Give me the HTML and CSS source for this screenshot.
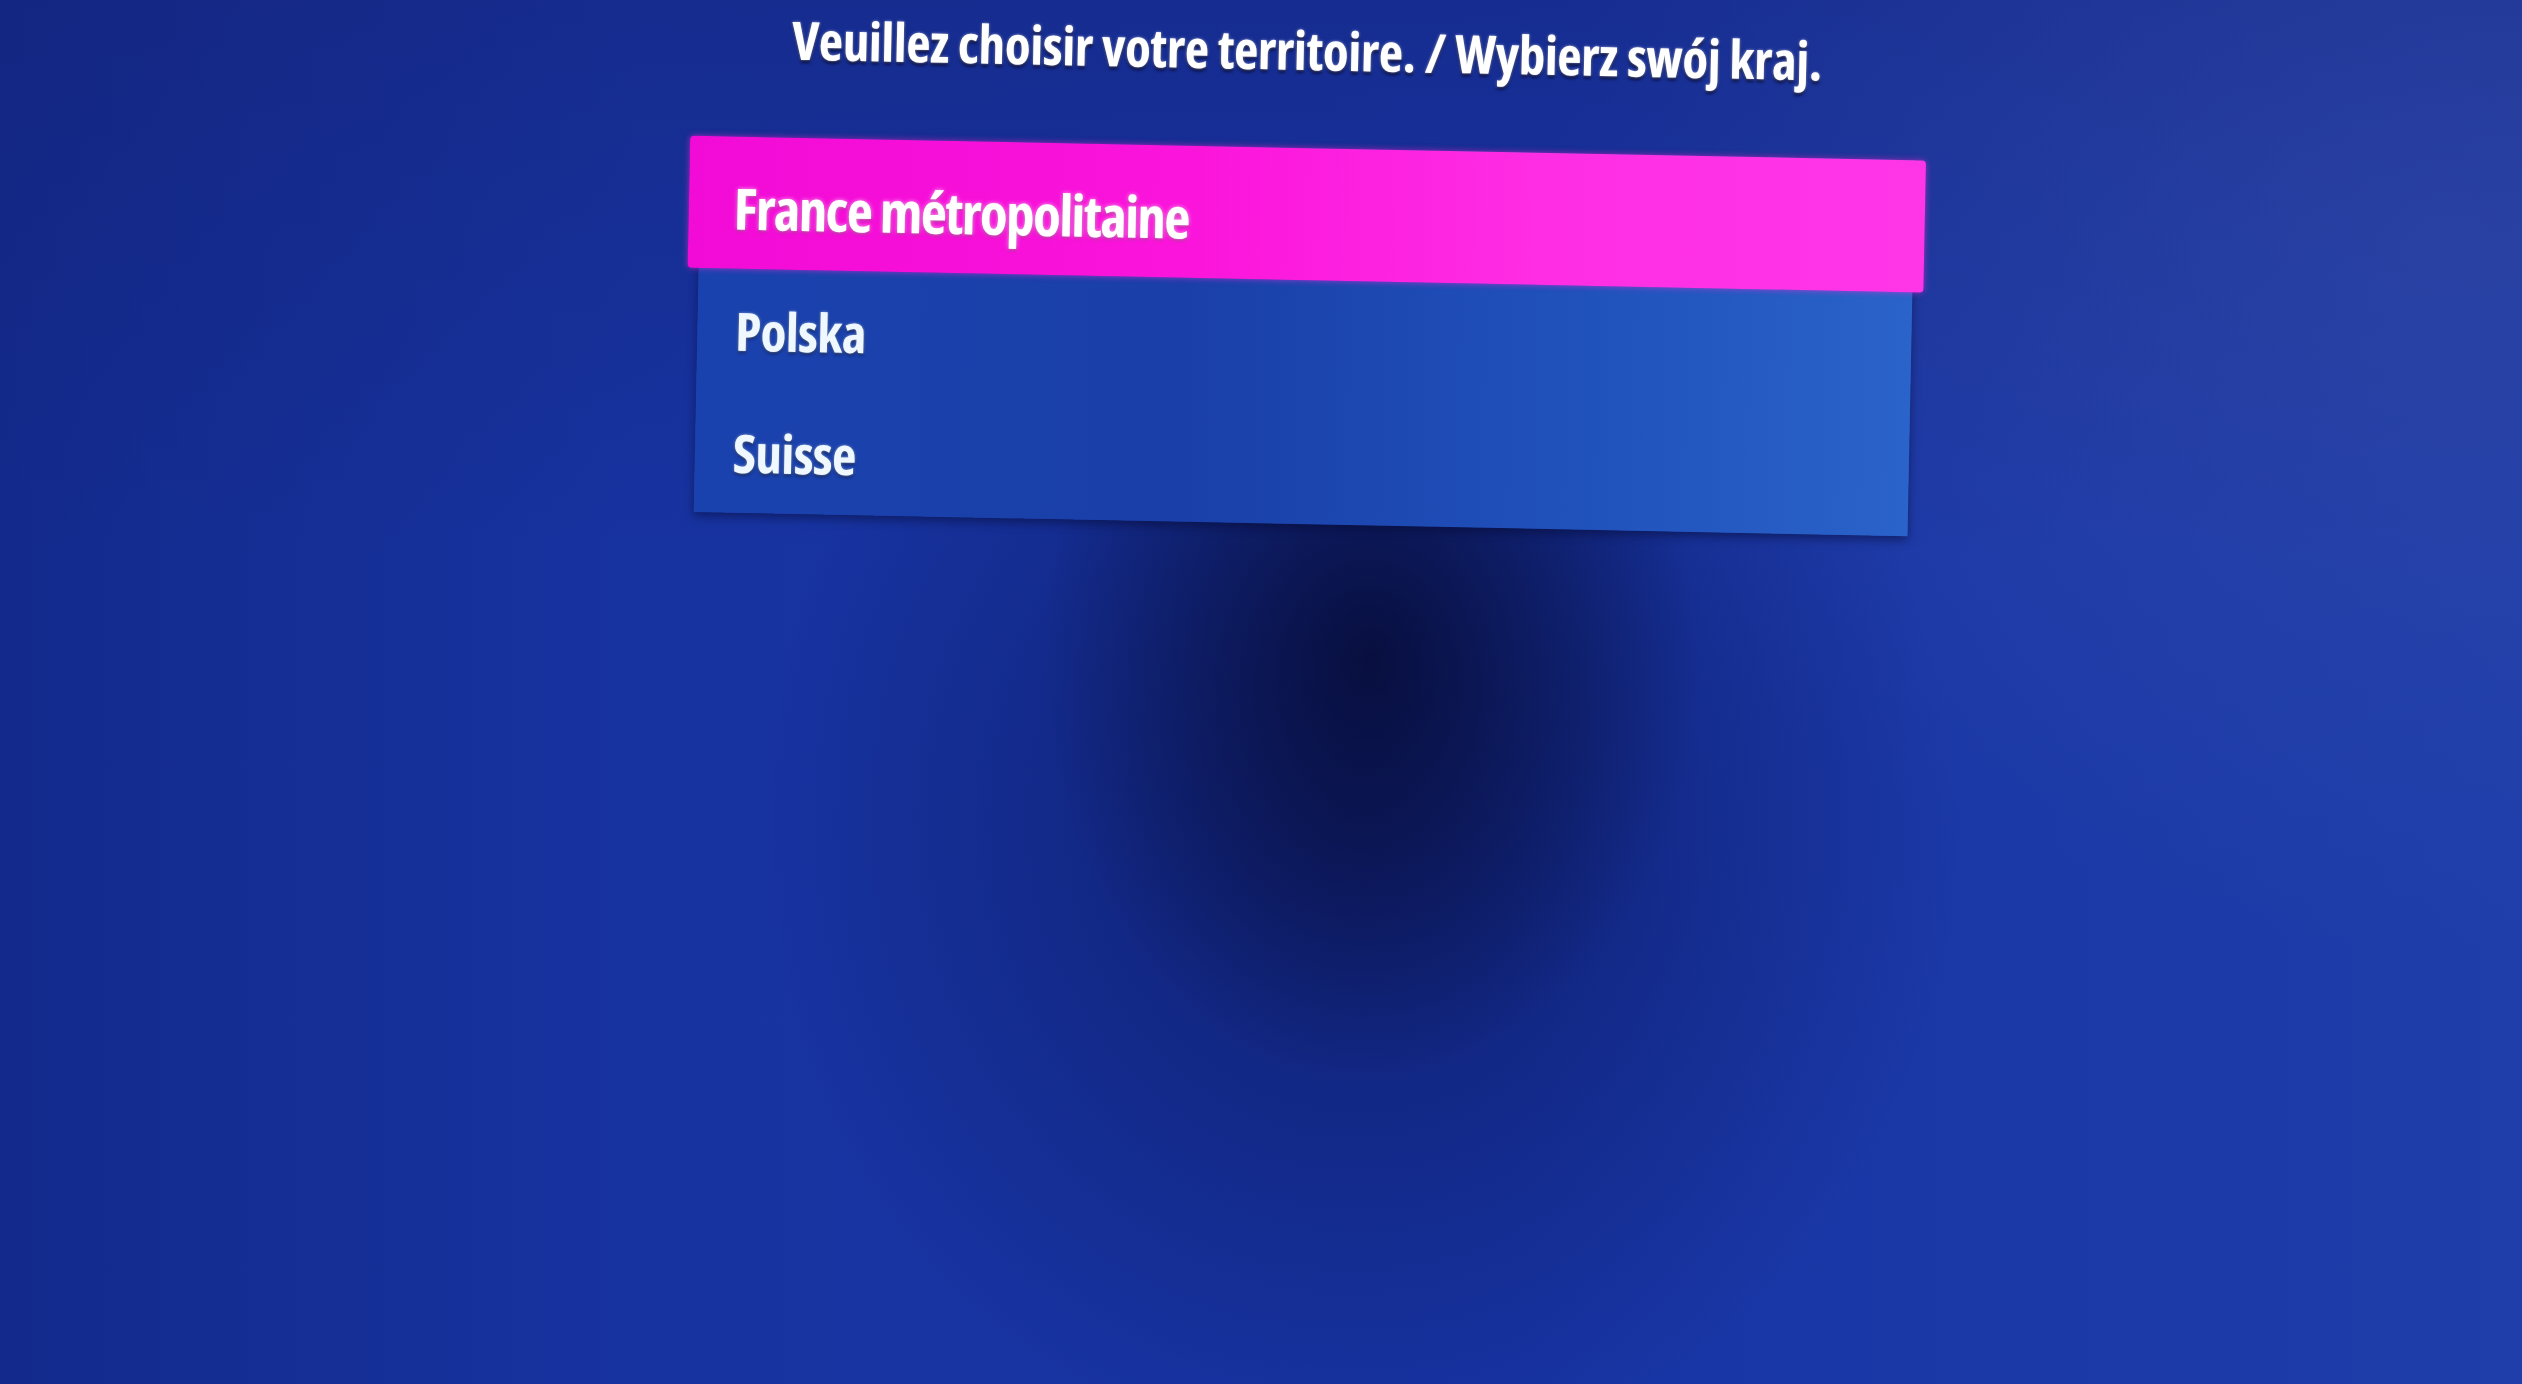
FILE: index.html
```html
<!DOCTYPE html>
<html lang="fr">
<head>
<meta charset="utf-8">
<title>Territoire</title>
<link rel="stylesheet" href="styles.css">
</head>
<body>
<main class="screen">
  <div class="content">
    <h1 class="title">Veuillez choisir votre territoire. / Wybierz swój kraj.</h1>
    <ul class="list">
      <li class="item item-focused">France métropolitaine</li>
      <li class="item">Polska</li>
      <li class="item">Suisse</li>
    </ul>
  </div>
</main>
</body>
</html>
```

FILE: styles.css
```css
html, body {
  margin: 0;
  padding: 0;
}

body {
  width: 2522px;
  height: 1384px;
  overflow: hidden;
  font-family: "Open Sans", "Noto Sans", "DejaVu Sans", sans-serif;
  color: #ffffff;
  background:
    radial-gradient(ellipse 330px 420px at 1370px 660px, rgba(6, 10, 48, 0.8), rgba(6, 10, 48, 0) 100%),
    radial-gradient(ellipse 600px 650px at 1360px 820px, rgba(8, 14, 70, 0.55), rgba(8, 14, 70, 0) 100%),
    radial-gradient(ellipse 900px 700px at 2450px 250px, rgba(60, 80, 170, 0.4), rgba(60, 80, 170, 0) 100%),
    linear-gradient(180deg, rgba(20, 30, 110, 0.35) 0%, rgba(20, 30, 110, 0) 40%),
    linear-gradient(90deg, #132a8c 0%, #1733a0 25%, #1734a4 60%, #1f3eaa 100%);
}

.screen {
  width: 2522px;
  height: 1384px;
  display: flex;
  justify-content: center;
  box-sizing: border-box;
  padding-left: 72px;
}

.content {
  width: 1214px;
  display: flex;
  flex-direction: column;
  align-items: center;
  transform: rotate(1.15deg);
  transform-origin: 50% 40%;
}

.title {
  margin: 0;
  padding-top: 19px;
  font-size: 53px;
  line-height: 62px;
  font-weight: 700;
  font-stretch: 75%;
  letter-spacing: -0.4px;
  white-space: nowrap;
  text-shadow: 0 0 3px rgba(255, 255, 255, 0.55), 0 3px 3px rgba(0, 0, 30, 0.7);
}

.list {
  list-style: none;
  margin: 67px 0 0 6px;
  padding: 0;
  width: 1214px;
  display: flex;
  flex-direction: column;
  background: linear-gradient(90deg, #1a42ae 0%, #1a3fa8 40%, #2153bd 75%, #2a63c9 100%);
  box-shadow: 0 4px 10px rgba(5, 10, 50, 0.5);
}

.item {
  height: 122px;
  display: flex;
  align-items: center;
  padding-left: 38px;
  font-size: 53px;
  font-weight: 700;
  font-stretch: 75%;
  letter-spacing: -0.6px;
  color: #f0f8ff;
  text-shadow: 0 0 3px rgba(220, 240, 255, 0.6), 0 2px 3px rgba(0, 10, 40, 0.7);
}

.item-focused {
  height: 132px;
  margin: 0 -11px;
  padding-left: 45px;
  padding-top: 10px;
  box-sizing: border-box;
  font-size: 57px;
  letter-spacing: -1.6px;
  color: #ffffff;
  border-radius: 4px;
  background: linear-gradient(90deg, #f20ad6 0%, #fb14db 40%, #ff2ee4 70%, #ff35e8 100%);
  box-shadow: 0 0 6px rgba(255, 40, 220, 0.6);
  text-shadow: 0 0 4px rgba(255, 220, 250, 0.8), 0 2px 3px rgba(120, 0, 90, 0.6);
}
```
